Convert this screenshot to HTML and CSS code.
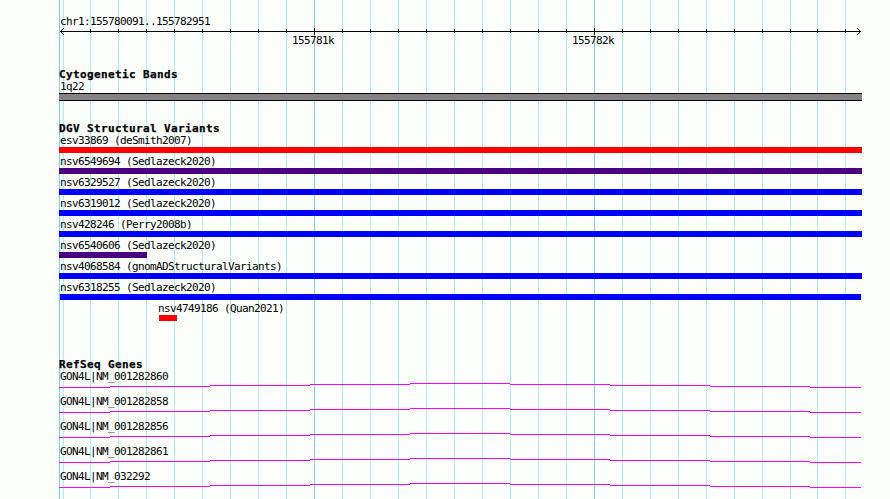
FILE: index.html
```
<!DOCTYPE html>
<html lang="en">
<head>
<meta charset="utf-8">
<title>chr1:155780091..155782951</title>
<link rel="stylesheet" href="styles.css">
</head>
<body>
<main class="browser">
  <svg class="grid" width="830" height="499" shape-rendering="crispEdges" aria-hidden="true">
    <path class="grid-minor" d="M4.5 0V499M31.5 0V499M59.5 0V499M87.5 0V499M115.5 0V499M143.5 0V499M171.5 0V499M199.5 0V499M227.5 0V499M283.5 0V499M311.5 0V499M339.5 0V499M367.5 0V499M395.5 0V499M423.5 0V499M451.5 0V499M479.5 0V499M507.5 0V499M563.5 0V499M591.5 0V499M619.5 0V499M647.5 0V499M675.5 0V499M703.5 0V499M731.5 0V499M758.5 0V499M786.5 0V499"/>
    <path class="grid-major" d="M.5 0V499M255.5 0V499M535.5 0V499"/>
  </svg>

  <section class="ruler">
    <p class="label">chr1:155780091..155782951</p>
    <svg class="axis" width="803" height="7" shape-rendering="crispEdges">
      <path d="M1 3.5H802M31.5 1V5M59.5 1V5M87.5 1V5M115.5 1V5M143.5 1V5M171.5 1V5M199.5 1V5M227.5 1V5M255.5 0V7M283.5 1V5M311.5 1V5M339.5 1V5M367.5 1V5M395.5 1V5M423.5 1V5M451.5 1V5M479.5 1V5M507.5 1V5M535.5 0V7M563.5 1V5M591.5 1V5M619.5 1V5M647.5 1V5M675.5 1V5M703.5 1V5M731.5 1V5M758.5 1V5M786.5 1V5"/>
      <path d="M4 .5H5M3 1.5H4M2 2.5H3M2 4.5H3M3 5.5H4M4 6.5H5M798 .5H799M799 1.5H800M800 2.5H801M800 4.5H801M799 5.5H800M798 6.5H799"/>
    </svg>
    <div class="ticks"><span class="label">155781k</span><span class="label">155782k</span></div>
  </section>

  <section class="track bands">
    <h2>Cytogenetic Bands</h2>
    <p class="label">1q22</p>
    <div class="band"></div>
  </section>

  <section class="track variants">
    <h2>DGV Structural Variants</h2>
    <div class="variant loss"><p class="label">esv33869 (deSmith2007)</p><div class="bar"></div></div>
    <div class="variant inversion"><p class="label">nsv6549694 (Sedlazeck2020)</p><div class="bar"></div></div>
    <div class="variant gain"><p class="label">nsv6329527 (Sedlazeck2020)</p><div class="bar"></div></div>
    <div class="variant gain"><p class="label">nsv6319012 (Sedlazeck2020)</p><div class="bar"></div></div>
    <div class="variant gain"><p class="label">nsv428246 (Perry2008b)</p><div class="bar"></div></div>
    <div class="variant inversion partial"><p class="label">nsv6540606 (Sedlazeck2020)</p><div class="bar"></div></div>
    <div class="variant gain"><p class="label">nsv4068584 (gnomADStructuralVariants)</p><div class="bar"></div></div>
    <div class="variant gain inner"><p class="label">nsv6318255 (Sedlazeck2020)</p><div class="bar"></div></div>
    <div class="variant loss short"><p class="label">nsv4749186 (Quan2021)</p><div class="bar"></div></div>
  </section>

  <svg class="defs" width="0" height="0"><defs>
    <path id="intron" d="M0 4.5H51M51 3.5H151M151 2.5H251M251 1.5H351M351 .5H451M451 1.5H551M551 2.5H651M651 3.5H751M751 4.5H802"/>
  </defs></svg>
  <section class="track genes">
    <h2>RefSeq Genes</h2>
    <div class="gene"><p class="label">GON4L|NM_001282860</p><svg width="803" height="5" shape-rendering="crispEdges"><use href="#intron"/></svg></div>
    <div class="gene"><p class="label">GON4L|NM_001282858</p><svg width="803" height="5" shape-rendering="crispEdges"><use href="#intron"/></svg></div>
    <div class="gene"><p class="label">GON4L|NM_001282856</p><svg width="803" height="5" shape-rendering="crispEdges"><use href="#intron"/></svg></div>
    <div class="gene"><p class="label">GON4L|NM_001282861</p><svg width="803" height="5" shape-rendering="crispEdges"><use href="#intron"/></svg></div>
    <div class="gene"><p class="label">GON4L|NM_032292</p><svg width="803" height="5" shape-rendering="crispEdges"><use href="#intron"/></svg></div>
  </section>
</main>
</body>
</html>
```
FILE: styles.css
```
* { box-sizing: border-box; }
body {
  margin: 0;
  background: #fcfefc;
  color: #000;
  font-family: "DejaVu Sans Mono", monospace;
}
svg { display: block; fill: none; }
.browser {
  position: relative;
  width: 890px;
  height: 499px;
  padding: 16px 28px 0 59px;
  overflow: hidden;
}
.grid { position: absolute; left: 59px; top: 0; z-index: -1; }
.grid-minor { stroke: #afeeee; }
.grid-major { stroke: #84ceee; }
.defs { position: absolute; }

.label {
  margin: 0;
  padding-left: 1px;
  height: 12px;
  font-size: 11px;
  line-height: 12px;
  letter-spacing: -0.622px;
  white-space: nowrap;
}
h2 {
  margin: 0;
  height: 12px;
  font-size: 11px;
  line-height: 12px;
  font-weight: bold;
  letter-spacing: 0.378px;
  -webkit-text-stroke: 0.25px #000;
  white-space: nowrap;
}

.ruler { height: 53px; }
.axis { stroke: #000; }
.ticks { display: flex; gap: 237px; padding-left: 232px; }
.ticks .label { width: 43px; }

.bands { height: 54px; }
.band {
  width: 803px;
  height: 8px;
  background: #848284;
  border: solid #000;
  border-width: 1px 0;
}

.variants { height: 236px; }
.variant { height: 21px; }
.bar { width: 803px; height: 6px; }
.loss .bar { background: #f00; }
.gain .bar { background: #00f; }
.inversion .bar { background: #4b0082; }
.partial .bar { width: 88px; }
.inner .bar { width: 801px; margin-left: 1px; }
.short { padding-left: 99px; }
.short .label { padding-left: 0; }
.short .bar { width: 18px; margin-left: 1px; }

.gene { height: 25px; }
.gene svg { stroke: #f0f; }
```
